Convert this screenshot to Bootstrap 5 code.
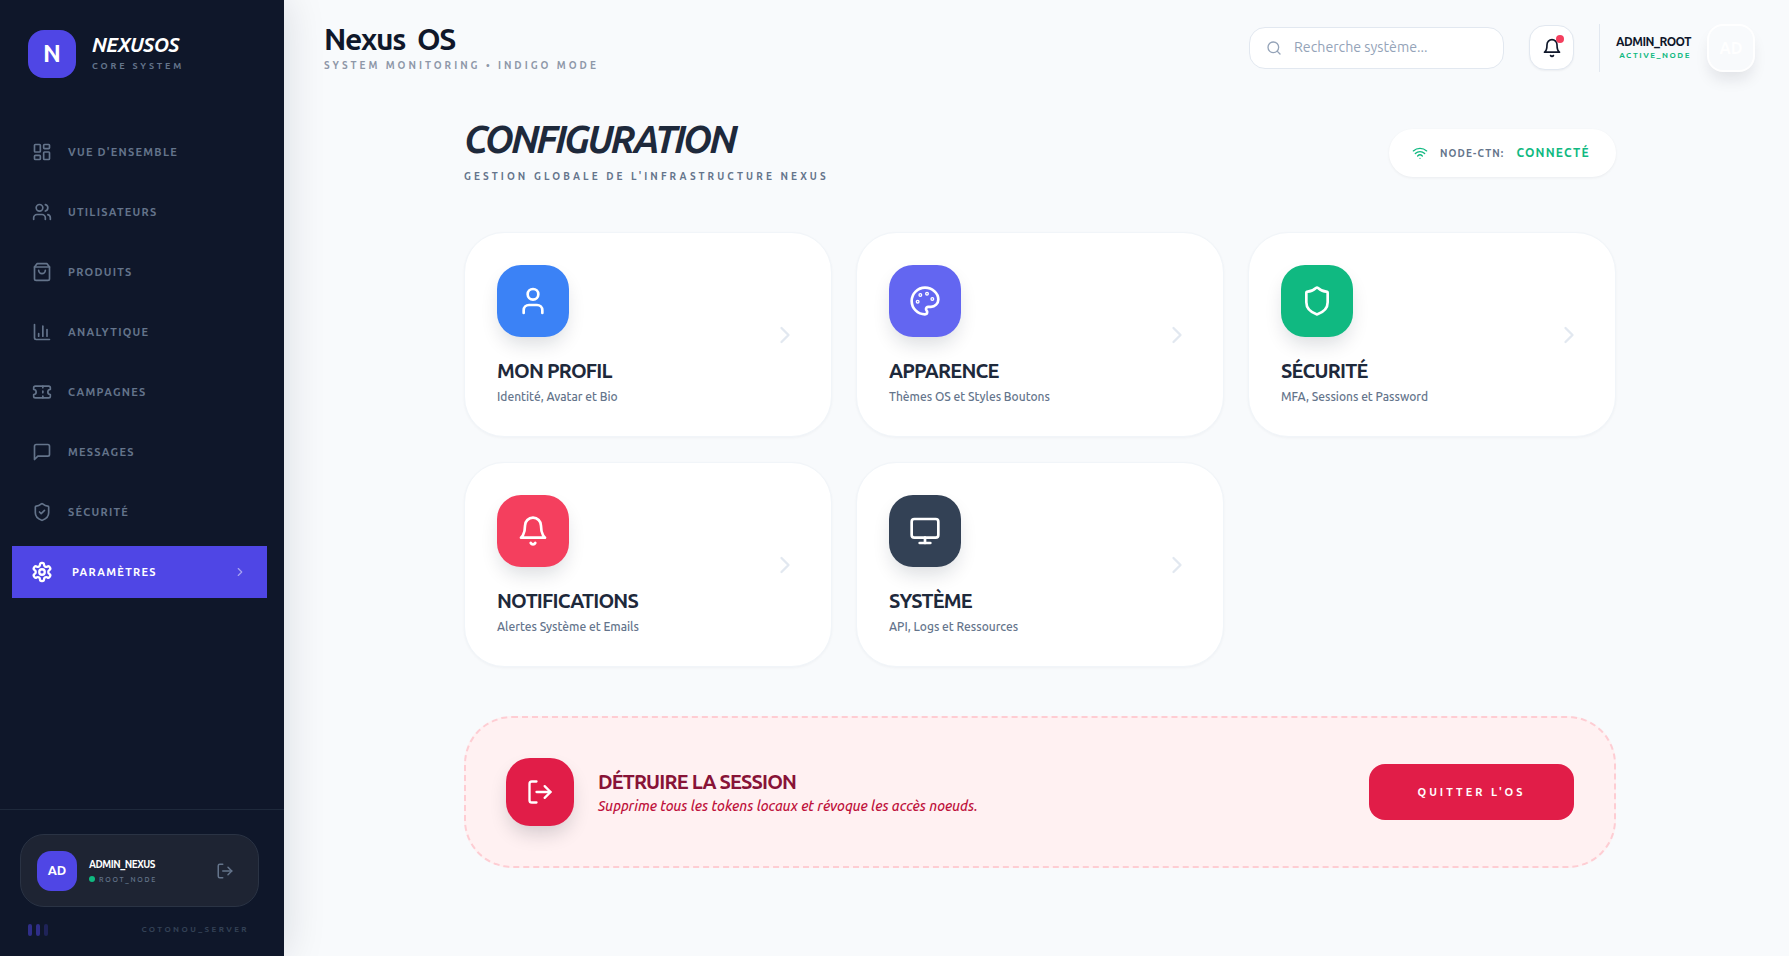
<!DOCTYPE html>
<html lang="fr">
<head>
  <meta charset="UTF-8">
  <meta name="viewport" content="width=device-width, initial-scale=1.0">
  <title>Nexus OS</title>
  <link href="https://cdn.jsdelivr.net/npm/bootstrap@5.3.0/dist/css/bootstrap.min.css" rel="stylesheet">
  <style>
    body {
      font-family: Ubuntu, "Noto Sans", sans-serif;
      background-color: #f8fafc;
      height: 956px;
      overflow: hidden;
    }
    svg.ico {
      fill: none;
      stroke: currentColor;
      stroke-width: 2;
      stroke-linecap: round;
      stroke-linejoin: round;
      flex-shrink: 0;
    }
    .side {
      width: 284px;
      height: 956px;
      background-color: #0f172a;
      box-shadow: 0 0 40px rgba(15, 23, 42, .14);
      position: relative;
      z-index: 2;
    }
    .brand { padding: 30px 28px 0; height: 126px; }
    .brand-mark {
      width: 48px; height: 48px; border-radius: 16px;
      background: #4f46e5; color: #fff; font-weight: 700; font-size: 24px;
    }
    .brand-name { font-size: 20px; font-weight: 700; font-style: italic; color: #fff; line-height: 24px; letter-spacing: -.5px; margin-top: 3px; }
    .brand-sub { font-size: 9px; font-weight: 700; color: #64748b; letter-spacing: .32em; line-height: 12px; margin-top: 3px; }
    .side-nav { padding: 0 17px 0 12px; gap: 8px; }
    .side-link {
      height: 52px; padding: 0 20px; gap: 16px;
      color: #64748b; font-size: 11px; font-weight: 700; letter-spacing: 1.25px;
      text-decoration: none;
    }
    .side-link.on { background: #4f46e5; color: #fff; padding-left: 19px; gap: 19px; }
    .side-link.on .side-gear { stroke-width: 2.5; }
    .side-link.on .side-chev { margin-left: auto; opacity: .5; }
    .side-foot { border-top: 1px solid #1e293b; padding: 24px 25px 0 20px; height: 147px; }
    .who {
      height: 73px; border-radius: 24px; padding: 0 16px;
      background: #1e2433; border: 1px solid #2a3344; gap: 12px;
    }
    .who-ava {
      width: 40px; height: 40px; border-radius: 14px;
      background: #4f46e5; color: #fff; font-size: 13px; font-weight: 700;
    }
    .who-name { font-size: 10px; font-weight: 700; color: #fff; line-height: 14px; letter-spacing: -.5px; margin-top: 1px; }
    .who-role { font-size: 7px; font-weight: 500; color: #64748b; letter-spacing: .25em; line-height: 10px; margin-top: 2px; gap: 4px; }
    .who-dot { width: 6px; height: 6px; border-radius: 50%; background: #10b981; }
    .who-out { color: #64748b; margin-left: auto; margin-right: 8px; }
    .side-tail { margin-top: 17px; padding: 0 10px 0 8px; }
    .tail-bar { width: 4px; height: 12px; border-radius: 2px; background: #4f46e5; }
    .tail-txt { font-size: 8px; font-weight: 700; color: #334155; letter-spacing: 2.4px; }
    .page { min-width: 0; }
    .topbar { padding: 24px 34px 0 40px; height: 77px; }
    .top-title { font-size: 30px; font-weight: 700; color: #0f172a; line-height: 30px; letter-spacing: -1.3px; word-spacing: 6px; }
    .top-sub { font-size: 10px; font-weight: 700; color: #8e97a8; letter-spacing: .3em; line-height: 12px; margin-top: 6px; }
    .finder {
      width: 255px; height: 42px; border-radius: 16px;
      background: #fff; border: 1px solid #e2e8f0;
      padding: 0 16px 1px; gap: 12px; color: #94a3b8; font-size: 14.2px; margin-top: 3px;
    }
    .bell-btn {
      width: 45px; height: 45px; border-radius: 16px;
      background: #fff; border: 1px solid #e2e8f0; color: #0f172a;
      margin-left: 25px; margin-top: 1px; position: relative; box-shadow: 0 1px 2px rgba(15, 23, 42, .05);
    }
    .bell-dot {
      position: absolute; top: 9px; right: 9px; width: 8px; height: 8px;
      border-radius: 50%; background: #f43f5e;
    }
    .top-rule { width: 1px; height: 48px; background: #e2e8f0; margin: 0 16px 0 25px; }
    .top-who { padding-top: 11px; }
    .top-name { font-size: 12px; font-weight: 700; color: #0f172a; line-height: 14px; letter-spacing: -.5px; }
    .top-state { font-size: 8px; font-weight: 700; color: #10b981; letter-spacing: .19em; line-height: 10px; margin-top: 2px; }
    .top-ava {
      width: 48px; height: 48px; border-radius: 16px;
      background: #f8fafc; border: 2px solid #fff; color: #fff;
      font-size: 16px; font-weight: 700; margin-left: 16px;
      box-shadow: 0 10px 15px -3px rgba(15, 23, 42, .1);
    }
    .panel { width: 1152px; margin-left: 180px; }
    .panel-head { padding-top: 41px; height: 155px; }
    .panel-title { font-size: 38px; font-weight: 700; font-style: italic; color: #1e293b; line-height: 42px; letter-spacing: -2.75px; margin: 0; }
    .panel-sub { font-size: 10px; font-weight: 700; color: #64748b; letter-spacing: 3.1px; line-height: 12px; margin-top: 11px; }
    .link-pill {
      height: 48px; width: 227px; border-radius: 24px; background: #fff;
      padding: 0 23px; margin-top: 11px; box-shadow: 0 1px 3px rgba(15, 23, 42, .06);
      white-space: nowrap;
    }
    .pill-wifi { color: #10b981; }
    .pill-key { font-size: 10px; font-weight: 700; color: #64748b; letter-spacing: 1.1px; margin: 0 12px; }
    .pill-val { font-size: 12px; font-weight: 700; color: #10b981; letter-spacing: 1.15px; }
    .tile-grid { display: grid; grid-template-columns: repeat(3, 368px); gap: 25px 24px; }
    .tile {
      height: 205px; border-radius: 40px; background: #fff;
      border: 1px solid #f1f5f9; padding: 32px 32px 31px;
      box-shadow: 0 1px 3px rgba(15, 23, 42, .04);
    }
    .tile-mark {
      width: 72px; height: 72px; border-radius: 24px; color: #fff;
      box-shadow: 0 10px 20px -4px rgba(15, 23, 42, .16);
    }
    .tile-name { font-size: 20px; font-weight: 700; color: #1e293b; line-height: 24px; letter-spacing: -.8px; margin-top: 22px; }
    .tile-desc { font-size: 12px; font-weight: 500; color: #64748b; line-height: 16px; margin-top: 6px; }
    .tile-chev { color: #e2e8f0; }
    .danger-box {
      height: 152px; margin-top: 49px; border-radius: 48px;
      background: #fff1f2; border: 2px dashed #fecdd3; padding: 0 40px; gap: 24px;
    }
    .danger-mark {
      width: 68px; height: 68px; border-radius: 24px; background: #e11d48; color: #fff;
      box-shadow: 0 10px 20px -4px rgba(15, 23, 42, .2);
    }
    .danger-name { font-size: 20px; font-weight: 700; color: #881337; line-height: 24px; letter-spacing: -.85px; margin-top: 1px; }
    .danger-desc { font-size: 14px; font-weight: 500; font-style: italic; color: #be123c; line-height: 20px; margin-top: 2px; }
    .danger-btn {
      width: 205px; height: 56px; border-radius: 16px; border: 0;
      background: #e11d48; color: #fff; font-size: 11px; font-weight: 700; letter-spacing: 3px;
      margin-left: auto;
    }
    .c-blue { background: #3b82f6; }
    .c-indigo { background: #6366f1; }
    .c-green { background: #10b981; }
    .c-rose { background: #f43f5e; }
    .c-slate { background: #334155; }
  </style>
</head>
<body class="d-flex">
  <svg width="0" height="0" class="position-absolute">
    <symbol id="i-dash" viewBox="0 0 24 24"><rect x="3" y="3" width="7" height="9" rx="1"/><rect x="14" y="3" width="7" height="5" rx="1"/><rect x="14" y="12" width="7" height="9" rx="1"/><rect x="3" y="16" width="7" height="5" rx="1"/></symbol>
    <symbol id="i-users" viewBox="0 0 24 24"><path d="M16 21v-2a4 4 0 0 0-4-4H6a4 4 0 0 0-4 4v2"/><circle cx="9" cy="7" r="4"/><path d="M22 21v-2a4 4 0 0 0-3-3.87"/><path d="M16 3.13a4 4 0 0 1 0 7.75"/></symbol>
    <symbol id="i-bag" viewBox="0 0 24 24"><path d="M6 2 3 6v14a2 2 0 0 0 2 2h14a2 2 0 0 0 2-2V6l-3-4Z"/><path d="M3 6h18"/><path d="M16 10a4 4 0 0 1-8 0"/></symbol>
    <symbol id="i-chart" viewBox="0 0 24 24"><path d="M3 3v16a2 2 0 0 0 2 2h16"/><path d="M18 17V9"/><path d="M13 17V5"/><path d="M8 17v-3"/></symbol>
    <symbol id="i-ticket" viewBox="0 0 24 24"><path d="M2 9a3 3 0 0 1 0 6v2a2 2 0 0 0 2 2h16a2 2 0 0 0 2-2v-2a3 3 0 0 1 0-6V7a2 2 0 0 0-2-2H4a2 2 0 0 0-2 2Z"/><path d="M13 5v2"/><path d="M13 17v2"/><path d="M13 11v2"/></symbol>
    <symbol id="i-msg" viewBox="0 0 24 24"><path d="M21 15a2 2 0 0 1-2 2H7l-4 4V5a2 2 0 0 1 2-2h14a2 2 0 0 1 2 2z"/></symbol>
    <symbol id="i-shieldc" viewBox="0 0 24 24"><path d="M20 13c0 5-3.5 7.5-7.66 8.95a1 1 0 0 1-.67-.01C7.5 20.5 4 18 4 13V6a1 1 0 0 1 1-1c2 0 4.5-1.2 6.24-2.72a1.17 1.17 0 0 1 1.52 0C14.51 3.81 17 5 19 5a1 1 0 0 1 1 1z"/><path d="m9 12 2 2 4-4"/></symbol>
    <symbol id="i-shield" viewBox="0 0 24 24"><path d="M20 13c0 5-3.5 7.5-7.66 8.95a1 1 0 0 1-.67-.01C7.5 20.5 4 18 4 13V6a1 1 0 0 1 1-1c2 0 4.5-1.2 6.24-2.72a1.17 1.17 0 0 1 1.52 0C14.51 3.81 17 5 19 5a1 1 0 0 1 1 1z"/></symbol>
    <symbol id="i-gear" viewBox="0 0 24 24"><path d="M12.22 2h-.44a2 2 0 0 0-2 2v.18a2 2 0 0 1-1 1.73l-.43.25a2 2 0 0 1-2 0l-.15-.08a2 2 0 0 0-2.73.73l-.22.38a2 2 0 0 0 .73 2.73l.15.1a2 2 0 0 1 1 1.72v.51a2 2 0 0 1-1 1.74l-.15.09a2 2 0 0 0-.73 2.73l.22.38a2 2 0 0 0 2.73.73l.15-.08a2 2 0 0 1 2 0l.43.25a2 2 0 0 1 1 1.73V20a2 2 0 0 0 2 2h.44a2 2 0 0 0 2-2v-.18a2 2 0 0 1 1-1.73l.43-.25a2 2 0 0 1 2 0l.15.08a2 2 0 0 0 2.73-.73l.22-.39a2 2 0 0 0-.73-2.73l-.15-.08a2 2 0 0 1-1-1.74v-.5a2 2 0 0 1 1-1.74l.15-.09a2 2 0 0 0 .73-2.73l-.22-.38a2 2 0 0 0-2.73-.73l-.15.08a2 2 0 0 1-2 0l-.43-.25a2 2 0 0 1-1-1.73V4a2 2 0 0 0-2-2z"/><circle cx="12" cy="12" r="3"/></symbol>
    <symbol id="i-out" viewBox="0 0 24 24"><path d="M9 21H5a2 2 0 0 1-2-2V5a2 2 0 0 1 2-2h4"/><path d="m16 17 5-5-5-5"/><path d="M21 12H9"/></symbol>
    <symbol id="i-search" viewBox="0 0 24 24"><circle cx="11" cy="11" r="8"/><path d="m21 21-4.3-4.3"/></symbol>
    <symbol id="i-bell" viewBox="0 0 24 24"><path d="M6 8a6 6 0 0 1 12 0c0 7 3 9 3 9H3s3-2 3-9"/><path d="M10.3 21a1.94 1.94 0 0 0 3.4 0"/></symbol>
    <symbol id="i-wifi" viewBox="0 0 24 24"><path d="M12 20h.01"/><path d="M2 8.82a15 15 0 0 1 20 0"/><path d="M5 12.859a10 10 0 0 1 14 0"/><path d="M8.5 16.429a5 5 0 0 1 7 0"/></symbol>
    <symbol id="i-user" viewBox="0 0 24 24"><path d="M19 21v-2a4 4 0 0 0-4-4H9a4 4 0 0 0-4 4v2"/><circle cx="12" cy="7" r="4"/></symbol>
    <symbol id="i-palette" viewBox="0 0 24 24"><circle cx="13.5" cy="6.5" r=".5"/><circle cx="17.5" cy="10.5" r=".5"/><circle cx="8.5" cy="7.5" r=".5"/><circle cx="6.5" cy="12.5" r=".5"/><path d="M12 2C6.5 2 2 6.5 2 12s4.5 10 10 10c.926 0 1.648-.746 1.648-1.688 0-.437-.18-.835-.437-1.125-.29-.289-.438-.652-.438-1.125a1.64 1.64 0 0 1 1.668-1.668h1.996c3.051 0 5.555-2.503 5.555-5.554C21.965 6.012 17.461 2 12 2z"/></symbol>
    <symbol id="i-monitor" viewBox="0 0 24 24"><rect x="2" y="3" width="20" height="14" rx="2"/><path d="M8 21h8"/><path d="M12 17v4"/></symbol>
    <symbol id="i-chev" viewBox="0 0 24 24"><path d="m9 18 6-6-6-6"/></symbol>
  </svg>

  <aside class="side d-flex flex-column flex-shrink-0">
    <div class="brand d-flex gap-3">
      <div class="brand-mark d-flex align-items-center justify-content-center">N</div>
      <div>
        <div class="brand-name">NEXUSOS</div>
        <div class="brand-sub">CORE SYSTEM</div>
      </div>
    </div>
    <nav class="side-nav d-flex flex-column flex-grow-1">
      <a class="side-link d-flex align-items-center" href="#"><svg class="ico" width="20" height="20"><use href="#i-dash"/></svg>VUE D'ENSEMBLE</a>
      <a class="side-link d-flex align-items-center" href="#"><svg class="ico" width="20" height="20"><use href="#i-users"/></svg>UTILISATEURS</a>
      <a class="side-link d-flex align-items-center" href="#"><svg class="ico" width="20" height="20"><use href="#i-bag"/></svg>PRODUITS</a>
      <a class="side-link d-flex align-items-center" href="#"><svg class="ico" width="20" height="20"><use href="#i-chart"/></svg>ANALYTIQUE</a>
      <a class="side-link d-flex align-items-center" href="#"><svg class="ico" width="20" height="20"><use href="#i-ticket"/></svg>CAMPAGNES</a>
      <a class="side-link d-flex align-items-center" href="#"><svg class="ico" width="20" height="20"><use href="#i-msg"/></svg>MESSAGES</a>
      <a class="side-link d-flex align-items-center" href="#"><svg class="ico" width="20" height="20"><use href="#i-shieldc"/></svg>SÉCURITÉ</a>
      <a class="side-link on d-flex align-items-center" href="#"><svg class="ico side-gear" width="22" height="22"><use href="#i-gear"/></svg>PARAMÈTRES<svg class="ico side-chev" width="14" height="14"><use href="#i-chev"/></svg></a>
    </nav>
    <div class="side-foot">
      <div class="who d-flex align-items-center">
        <div class="who-ava d-flex align-items-center justify-content-center">AD</div>
        <div>
          <div class="who-name">ADMIN_NEXUS</div>
          <div class="who-role d-flex align-items-center"><span class="who-dot"></span>ROOT_NODE</div>
        </div>
        <svg class="ico who-out" width="18" height="18"><use href="#i-out"/></svg>
      </div>
      <div class="side-tail d-flex align-items-center justify-content-between">
        <div class="d-flex gap-1">
          <span class="tail-bar opacity-50"></span>
          <span class="tail-bar opacity-50"></span>
          <span class="tail-bar opacity-25"></span>
        </div>
        <div class="tail-txt">COTONOU_SERVER</div>
      </div>
    </div>
  </aside>

  <main class="page flex-grow-1">
    <header class="topbar d-flex justify-content-between">
      <div>
        <div class="top-title">Nexus OS</div>
        <div class="top-sub">SYSTEM MONITORING • INDIGO MODE</div>
      </div>
      <div class="d-flex align-items-start">
        <div class="finder d-flex align-items-center"><svg class="ico" width="16" height="16"><use href="#i-search"/></svg>Recherche système...</div>
        <div class="bell-btn d-flex align-items-center justify-content-center"><svg class="ico" width="20" height="20"><use href="#i-bell"/></svg><span class="bell-dot"></span></div>
        <div class="top-rule"></div>
        <div class="top-who text-end">
          <div class="top-name">ADMIN_ROOT</div>
          <div class="top-state">ACTIVE_NODE</div>
        </div>
        <div class="top-ava d-flex align-items-center justify-content-center">AD</div>
      </div>
    </header>

    <section class="panel">
      <div class="panel-head d-flex justify-content-between align-items-start">
        <div>
          <h1 class="panel-title">CONFIGURATION</h1>
          <div class="panel-sub">GESTION GLOBALE DE L'INFRASTRUCTURE NEXUS</div>
        </div>
        <div class="link-pill d-flex align-items-center">
          <svg class="ico pill-wifi" width="16" height="16"><use href="#i-wifi"/></svg>
          <span class="pill-key">NODE-CTN:</span>
          <span class="pill-val">CONNECTÉ</span>
        </div>
      </div>

      <div class="tile-grid">
        <div class="tile d-flex justify-content-between align-items-center">
          <div>
            <div class="tile-mark c-blue d-flex align-items-center justify-content-center"><svg class="ico" width="32" height="32"><use href="#i-user"/></svg></div>
            <div class="tile-name">MON PROFIL</div>
            <div class="tile-desc">Identité, Avatar et Bio</div>
          </div>
          <svg class="ico tile-chev" width="28" height="28"><use href="#i-chev"/></svg>
        </div>
        <div class="tile d-flex justify-content-between align-items-center">
          <div>
            <div class="tile-mark c-indigo d-flex align-items-center justify-content-center"><svg class="ico" width="32" height="32"><use href="#i-palette"/></svg></div>
            <div class="tile-name">APPARENCE</div>
            <div class="tile-desc">Thèmes OS et Styles Boutons</div>
          </div>
          <svg class="ico tile-chev" width="28" height="28"><use href="#i-chev"/></svg>
        </div>
        <div class="tile d-flex justify-content-between align-items-center">
          <div>
            <div class="tile-mark c-green d-flex align-items-center justify-content-center"><svg class="ico" width="32" height="32"><use href="#i-shield"/></svg></div>
            <div class="tile-name">SÉCURITÉ</div>
            <div class="tile-desc">MFA, Sessions et Password</div>
          </div>
          <svg class="ico tile-chev" width="28" height="28"><use href="#i-chev"/></svg>
        </div>
        <div class="tile d-flex justify-content-between align-items-center">
          <div>
            <div class="tile-mark c-rose d-flex align-items-center justify-content-center"><svg class="ico" width="32" height="32"><use href="#i-bell"/></svg></div>
            <div class="tile-name">NOTIFICATIONS</div>
            <div class="tile-desc">Alertes Système et Emails</div>
          </div>
          <svg class="ico tile-chev" width="28" height="28"><use href="#i-chev"/></svg>
        </div>
        <div class="tile d-flex justify-content-between align-items-center">
          <div>
            <div class="tile-mark c-slate d-flex align-items-center justify-content-center"><svg class="ico" width="32" height="32"><use href="#i-monitor"/></svg></div>
            <div class="tile-name">SYSTÈME</div>
            <div class="tile-desc">API, Logs et Ressources</div>
          </div>
          <svg class="ico tile-chev" width="28" height="28"><use href="#i-chev"/></svg>
        </div>
      </div>

      <div class="danger-box d-flex align-items-center">
        <div class="danger-mark d-flex align-items-center justify-content-center"><svg class="ico" width="28" height="28"><use href="#i-out"/></svg></div>
        <div>
          <div class="danger-name">DÉTRUIRE LA SESSION</div>
          <div class="danger-desc">Supprime tous les tokens locaux et révoque les accès noeuds.</div>
        </div>
        <button class="danger-btn" type="button">QUITTER L'OS</button>
      </div>
    </section>
  </main>

  <script src="https://cdn.jsdelivr.net/npm/bootstrap@5.3.0/dist/js/bootstrap.bundle.min.js"></script>
</body>
</html>
